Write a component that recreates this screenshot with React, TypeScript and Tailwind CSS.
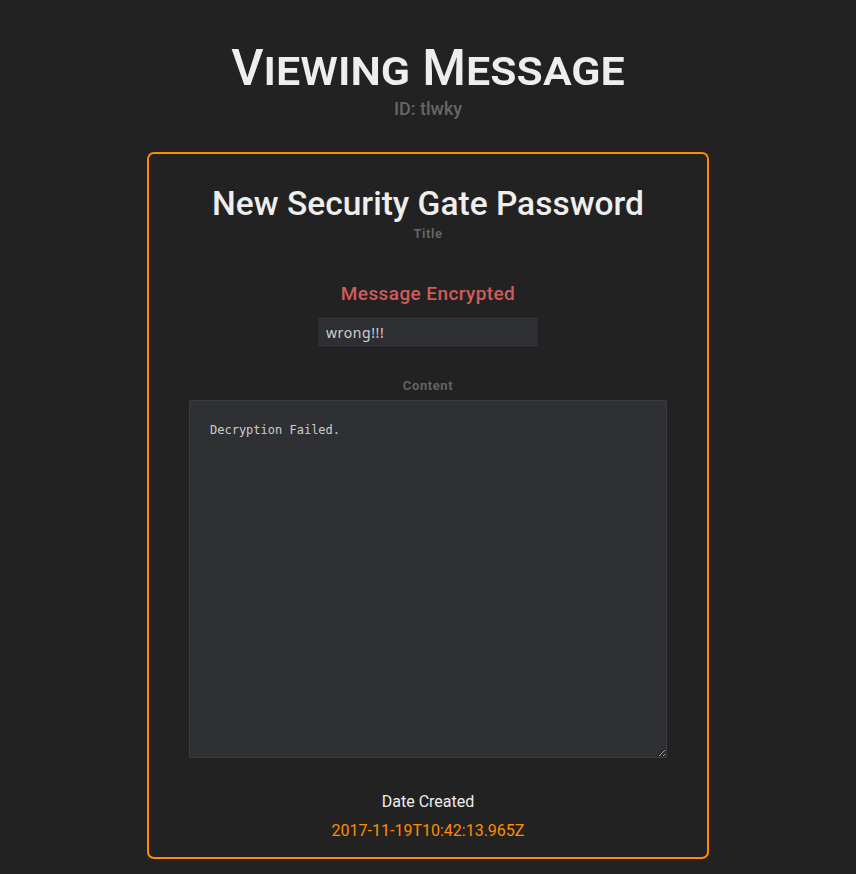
export default function App() {
	return (
		<div className="min-h-[874px] bg-[#222222] pt-[38px] pb-4 font-['Roboto',sans-serif]">
			<header className="flex flex-col items-center">
				<h1 className="text-[50px] leading-[60px] font-medium text-[#eeeeee] tracking-[0px] [font-variant:small-caps]">
					Viewing Message
				</h1>
				<div className="text-[18px] leading-[22px] font-medium text-[#666666]">ID: tlwky</div>
			</header>

			<main className="mx-auto mt-[32px] w-[562px] rounded-[7px] border-2 border-[#ff8c00] px-10 pt-[30px] pb-[16px] flex flex-col items-center">
				<h2 className="text-[33.5px] leading-[40px] font-medium text-[#eeeeee]">
					New Security Gate Password
				</h2>
				<span className="mt-[2px] text-[13px] leading-[16px] font-semibold text-[#666666] tracking-[0.6px]">Title</span>

				<h3 className="mt-[40px] text-[19px] leading-[24px] font-medium text-[#d05c5c] tracking-[0.4px]">
					Message Encrypted
				</h3>
				<input
					type="text"
					defaultValue="wrong!!!"
					className="mt-[10px] w-[222px] h-[32px] rounded-[3px] border border-[#1c1c1c] bg-[#2e2f33] px-[8px] text-[14px] tracking-[0.6px] text-[#d0d0d0] font-['Noto_Sans',sans-serif] outline-none"
				/>

				<span className="mt-[30px] text-[13px] leading-[16px] font-semibold text-[#666666] tracking-[0.6px]">Content</span>
				<textarea
					readOnly
					defaultValue="Decryption Failed."
					className="mt-[6px] w-[478px] h-[358px] border border-[#3a3b3f] bg-[#2f3034] px-[20px] py-[20px] text-[12px] leading-[18px] text-[#cccccc] font-['DejaVu_Sans_Mono',monospace] outline-none"
				/>

				<div className="mt-[34px] text-[16px] leading-[20px] text-[#eeeeee]">Date Created</div>
				<div className="mt-[9px] text-[16px] leading-[20px] text-[#ff8c00]">2017-11-19T10:42:13.965Z</div>
			</main>
		</div>
	);
}
